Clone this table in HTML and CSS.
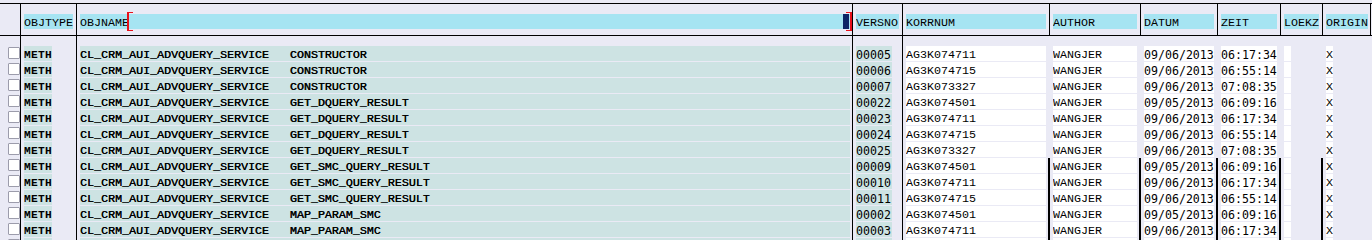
FILE: index.html
```html
<!DOCTYPE html>
<html>
<head>
<meta charset="utf-8">
<link rel="stylesheet" href="styles.css">
</head>
<body>
<div class="tbl">
  <div class="row head">
    <div class="c"></div>
    <div class="c"><span class="h w49">OBJTYPE</span></div>
    <div class="c"><span class="h w770 edit">OBJNAME<i class="brl"></i><i class="cur"></i><i class="brr"></i></span></div>
    <div class="c"><span class="h w43">VERSNO</span></div>
    <div class="c"><span class="h w140">KORRNUM</span></div>
    <div class="c"><span class="h w84">AUTHOR</span></div>
    <div class="c"><span class="h w70">DATUM</span></div>
    <div class="c"><span class="h w56">ZEIT</span></div>
    <div class="c"><span class="h w35">LOEKZ</span></div>
    <div class="c last"><span class="h w42">ORIGIN</span></div>
  </div>
  <div class="row gap">
    <div class="c"></div><div class="c"></div><div class="c"></div><div class="c"></div>
    <div class="c n"></div><div class="c n"></div><div class="c n"></div><div class="c n"></div><div class="c n"></div><div class="c n"></div>
  </div>
  <div id="rows"></div>
</div>
<script src="app.js"></script>
</body>
</html>
```
FILE: app.js
```js
var data = [
  ["CONSTRUCTOR","00005","AG3K074711","09/06/2013","06:17:34"],
  ["CONSTRUCTOR","00006","AG3K074715","09/06/2013","06:55:14"],
  ["CONSTRUCTOR","00007","AG3K073327","09/06/2013","07:08:35"],
  ["GET_DQUERY_RESULT","00022","AG3K074501","09/05/2013","06:09:16"],
  ["GET_DQUERY_RESULT","00023","AG3K074711","09/06/2013","06:17:34"],
  ["GET_DQUERY_RESULT","00024","AG3K074715","09/06/2013","06:55:14"],
  ["GET_DQUERY_RESULT","00025","AG3K073327","09/06/2013","07:08:35"],
  ["GET_SMC_QUERY_RESULT","00009","AG3K074501","09/05/2013","06:09:16"],
  ["GET_SMC_QUERY_RESULT","00010","AG3K074711","09/06/2013","06:17:34"],
  ["GET_SMC_QUERY_RESULT","00011","AG3K074715","09/06/2013","06:55:14"],
  ["MAP_PARAM_SMC","00002","AG3K074501","09/05/2013","06:09:16"],
  ["MAP_PARAM_SMC","00003","AG3K074711","09/06/2013","06:17:34"],
  ["","","","",""]
];
var host = document.getElementById("rows");
var html = "";
data.forEach(function (d, i) {
  var full = i >= 7 ? " full" : "";
  var empty = d[0] === "";
  html += '<div class="row r' + full + '">' +
    '<div class="c"><i class="cb"></i></div>' +
    '<div class="c"><span class="t w28 b">' + (empty ? '' : 'METH') + '</span></div>' +
    '<div class="c"><span class="t w770 o">' + (empty ? '' : 'CL_CRM_AUI_ADVQUERY_SERVICE   ' + d[0]) + '</span></div>' +
    '<div class="c"><span class="t w36 s">' + d[1] + '</span></div>' +
    '<div class="c x"><span class="w w140">' + d[2] + '</span></div>' +
    '<div class="c x"><span class="w w84">' + (empty ? '' : 'WANGJER') + '</span></div>' +
    '<div class="c x"><span class="w w70 s">' + d[3] + '</span></div>' +
    '<div class="c x"><span class="w w56 s">' + d[4] + '</span></div>' +
    '<div class="c x"><span class="w w7"></span></div>' +
    '<div class="c n"><span class="w w7">' + (empty ? '' : 'X') + '</span></div>' +
    '</div>';
});
host.innerHTML = html;
```
FILE: styles.css
```css
html, body {
  margin: 0;
  padding: 0;
  width: 1372px;
  height: 240px;
  overflow: hidden;
  background: #eaeaf5;
}
.tbl {
  margin-top: 3px;
  border-top: 1px solid #000;
  font-family: "Liberation Mono", "DejaVu Sans Mono", monospace;
  font-size: 11.66px;
  color: #000;
}
.row {
  display: grid;
  grid-template-columns: 21px 56px 776px 50px 147px 91px 77px 63px 42px 48px;
}
.c {
  box-sizing: border-box;
  padding-left: 3px;
  border-right: 1px solid #000;
  position: relative;
}
.c.n { border-right-color: transparent; }
.row.r .c.x { border-right-color: transparent; }
.row.r.full .c.x { border-right: 2px solid #000; }
.row.r.full .c.x span { margin-right: -1px; }
.head {
  height: 31px;
  border-bottom: 1px solid #000;
}
.head .c { padding-top: 10px; }
.gap { height: 10px; }
.r { height: 16px; }
.h, .t, .w {
  display: block;
  height: 15px;
  line-height: 18px;
  white-space: pre;
  overflow: hidden;
}
.h { background: #a6e4f2; }
.t { background: #cde3e3; }
.w { background: #ffffff; }
.s { font-family: "DejaVu Sans Mono", "Liberation Mono", monospace; font-size: 11.6px; }
.b { font-weight: bold; font-size: 11.2px; letter-spacing: 0.28px; }
.o { color: #000; text-shadow: 0.3px 0 0 #000; }
.w7 { width: 7px; }
.w28 { width: 28px; }
.w35 { width: 35px; }
.w36 { width: 36px; }
.w42 { width: 42px; }
.w43 { width: 43px; }
.w49 { width: 49px; }
.w56 { width: 56px; }
.w70 { width: 70px; }
.w84 { width: 84px; }
.w140 { width: 140px; }
.w770 { width: 770px; }
.edit { position: relative; overflow: visible; }
.brl, .brr, .cur { position: absolute; display: block; }
.brl {
  left: 47px;
  top: -2px;
  width: 4px;
  height: 17px;
  border-left: 2px solid #e8101a;
  border-top: 1px solid #e8101a;
  border-bottom: 1px solid #e8101a;
}
.brr {
  left: 766px;
  top: -2px;
  width: 4px;
  height: 17px;
  border-right: 2px solid #e8101a;
  border-top: 1px solid #e8101a;
  border-bottom: 1px solid #e8101a;
}
.cur {
  left: 763px;
  top: 0;
  width: 6px;
  height: 15px;
  background: #0c2466;
}
.cb {
  position: absolute;
  left: 8px;
  top: 1px;
  width: 10px;
  height: 10px;
  background: #fff;
  border: 1px solid #9c9cab;
  border-radius: 1px;
}
```
